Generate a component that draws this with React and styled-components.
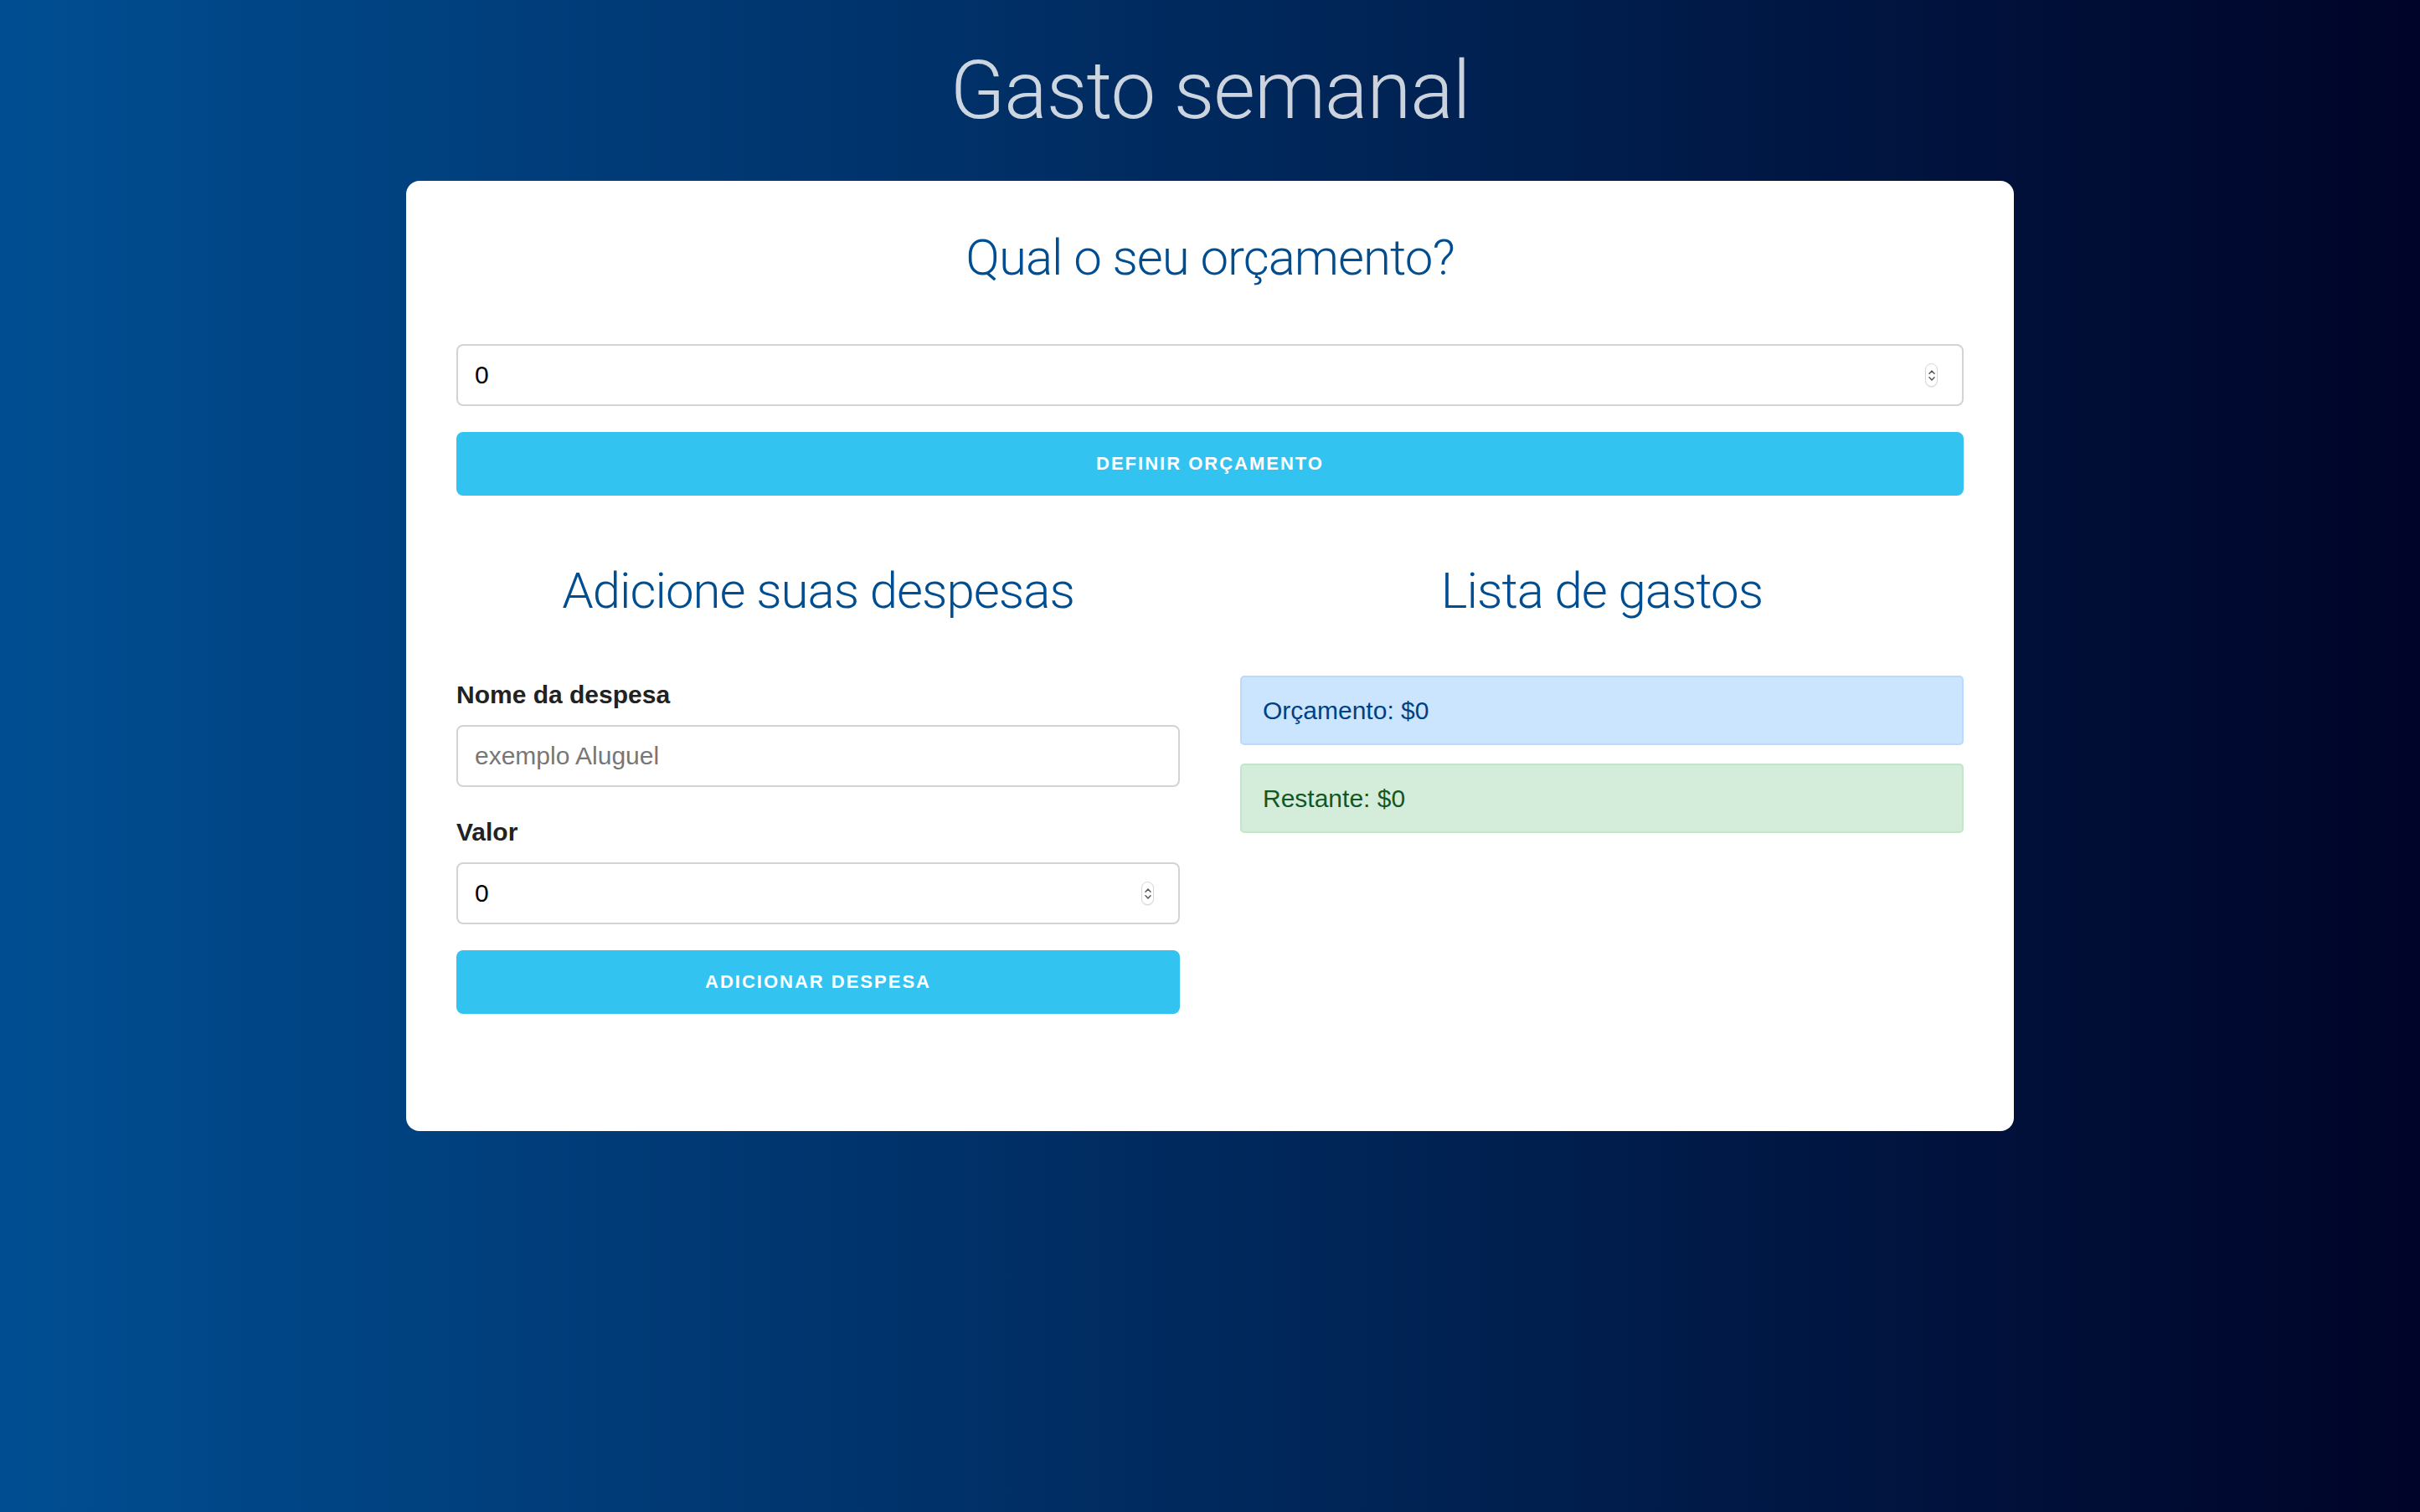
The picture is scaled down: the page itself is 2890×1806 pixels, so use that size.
import React from "react";
import styled, { createGlobalStyle, css } from "styled-components";

const GlobalStyle = createGlobalStyle`
  html, body {
    margin: 0;
    padding: 0;
  }
  body {
    min-height: 100vh;
    background: linear-gradient(to right, #004e92, #000428);
    font-family: "Liberation Sans", Arial, sans-serif;
    color: #222;
  }
  * { box-sizing: border-box; }
`;

const Page = styled.main`
  min-height: 1806px;
  padding-top: 51px;
  display: flex;
  flex-direction: column;
  align-items: center;
`;

const Title = styled.h1`
  margin: 0 0 50px;
  font-family: Roboto, "Liberation Sans", sans-serif;
  font-weight: 300;
  font-size: 96px;
  line-height: 115px;
  letter-spacing: -1px;
  color: rgba(255, 255, 255, 0.8);
  text-align: center;
`;

const Card = styled.section`
  width: 1920px;
  background: #fff;
  border-radius: 16px;
  padding: 53px 60px 140px;
`;

const Heading = styled.h3`
  margin: 0 0 ${(p) => p.$gap || 0}px;
  font-family: Roboto, "Liberation Sans", sans-serif;
  font-weight: 300;
  font-size: 60px;
  line-height: 78px;
  letter-spacing: -1px;
  color: #004e92;
  text-align: center;
`;

const Form = styled.form`
  display: flex;
  flex-direction: column;
`;

const InputWrap = styled.div`
  position: relative;
  margin-bottom: ${(p) => p.$gap ?? 31}px;
`;

const Input = styled.input`
  display: block;
  width: 100%;
  height: 74px;
  padding: 0 20px;
  border: 2px solid #d3d3d3;
  border-radius: 8px;
  background: #fff;
  font-family: "Liberation Sans", Arial, sans-serif;
  font-size: 30px;
  color: #000;
  outline: none;
  -moz-appearance: textfield;
  &::placeholder {
    color: #777;
  }
  &::-webkit-inner-spin-button,
  &::-webkit-outer-spin-button {
    -webkit-appearance: none;
    margin: 0;
  }
`;

const Spinner = styled.span`
  position: absolute;
  right: 31px;
  top: 50%;
  transform: translateY(-50%);
  width: 15px;
  height: 28px;
  border-radius: 8px;
  border: 1px solid #d6d6d6;
  background: #fff;
  box-shadow: 0 1px 1px rgba(0, 0, 0, 0.08);
  display: flex;
  flex-direction: column;
  align-items: center;
  justify-content: center;
  gap: 3px;
  pointer-events: none;
`;

const Button = styled.button`
  display: block;
  width: 100%;
  height: 76px;
  border: none;
  border-radius: 8px;
  background: #33c3f0;
  color: #fff;
  font-family: "Liberation Sans", Arial, sans-serif;
  font-weight: 700;
  font-size: 22px;
  letter-spacing: 2px;
  text-transform: uppercase;
  cursor: pointer;
`;

const Row = styled.div`
  display: grid;
  grid-template-columns: 1fr 1fr;
  column-gap: 72px;
  margin-top: 75px;
`;

const Column = styled.div`
  display: flex;
  flex-direction: column;
`;

const Label = styled.label`
  display: block;
  font-weight: 700;
  font-size: 30px;
  line-height: 48px;
  color: #222;
  margin-bottom: 12px;
`;

const alertVariants = {
  primary: css`
    background: #cce5ff;
    border-color: #b8daff;
    color: #004085;
  `,
  success: css`
    background: #d4edda;
    border-color: #c3e6cb;
    color: #155724;
  `,
};

const Alert = styled.div`
  padding: 16px 25px 15px;
  border: 2px solid transparent;
  border-radius: 5px;
  font-size: 30px;
  line-height: 48px;
  margin-bottom: 22px;
  ${(p) => alertVariants[p.$variant]}
`;

function Chevron({ up }) {
  return (
    <svg width="8" height="5" viewBox="0 0 8 5" fill="none">
      <path
        d={up ? "M1 4.2 L4 1 L7 4.2" : "M1 0.8 L4 4 L7 0.8"}
        stroke="#555"
        strokeWidth="1.4"
        strokeLinecap="round"
        strokeLinejoin="round"
      />
    </svg>
  );
}

function NumberField({ gap }) {
  return (
    <InputWrap $gap={gap}>
      <Input type="number" defaultValue={0} />
      <Spinner>
        <Chevron up />
        <Chevron />
      </Spinner>
    </InputWrap>
  );
}

export default function App() {
  return (
    <>
      <GlobalStyle />
      <Page>
        <Title>Gasto semanal</Title>
        <Card>
          <Heading $gap={64}>Qual o seu orçamento?</Heading>
          <Form onSubmit={(e) => e.preventDefault()}>
            <NumberField gap={31} />
            <Button type="submit">Definir orçamento</Button>
          </Form>
          <Row>
            <Column>
              <Heading $gap={61}>Adicione suas despesas</Heading>
              <Form onSubmit={(e) => e.preventDefault()}>
                <Label htmlFor="nome">Nome da despesa</Label>
                <InputWrap $gap={30}>
                  <Input id="nome" type="text" placeholder="exemplo Aluguel" />
                </InputWrap>
                <Label htmlFor="valor">Valor</Label>
                <NumberField gap={31} />
                <Button type="submit">Adicionar despesa</Button>
              </Form>
            </Column>
            <Column>
              <Heading $gap={62}>Lista de gastos</Heading>
              <Alert $variant="primary">Orçamento: $0</Alert>
              <Alert $variant="success">Restante: $0</Alert>
            </Column>
          </Row>
        </Card>
      </Page>
    </>
  );
}
